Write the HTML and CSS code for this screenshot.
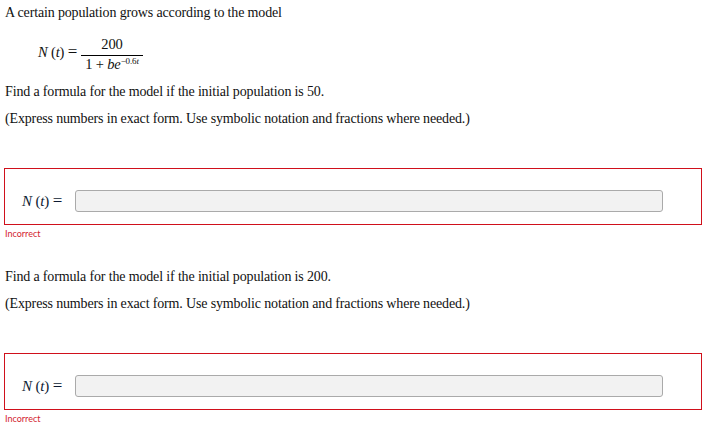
FILE: index.html
```html
<!DOCTYPE html>
<html>
<head>
<meta charset="utf-8">
<link rel="stylesheet" href="styles.css">
</head>
<body>
<div class="page">
  <p class="line first">A certain population grows according to the model</p>
  <div class="formula">
    <span class="lhs"><i>N</i> (<i>t</i>) <span class="eq">=</span></span>
    <span class="frac">
      <span class="num">200</span>
      <span class="den">1 + <i>be</i><sup>−0.6<i>t</i></sup></span>
    </span>
  </div>

  <p class="line find">Find a formula for the model if the initial population is 50.</p>
  <p class="line note">(Express numbers in exact form. Use symbolic notation and fractions where needed.)</p>
  <div class="answer">
    <span class="label"><i>N</i> (<i>t</i>) <span class="eq">=</span></span>
    <input class="field" type="text">
  </div>
  <div class="status">Incorrect</div>

  <p class="line find second">Find a formula for the model if the initial population is 200.</p>
  <p class="line note">(Express numbers in exact form. Use symbolic notation and fractions where needed.)</p>
  <div class="answer">
    <span class="label"><i>N</i> (<i>t</i>) <span class="eq">=</span></span>
    <input class="field" type="text">
  </div>
  <div class="status last">Incorrect</div>
</div>
</body>
</html>
```
FILE: styles.css
```css
html, body {
  margin: 0;
  padding: 0;
  background: #fff;
}
.page {
  padding: 5px 6px 0 4px;
  font-family: "Liberation Serif", serif;
  font-size: 14px;
  letter-spacing: -0.15px;
  color: #111;
}
.line {
  margin: 0;
  padding-left: 1px;
  line-height: 16px;
}
.formula {
  display: flex;
  align-items: flex-start;
  margin: 16px 0 0 34px;
  font-size: 14.5px;
}
.lhs {
  margin-top: 7px;
  margin-right: 4px;
  white-space: pre;
  line-height: 16px;
}
.eq {
  font-size: 17px;
  line-height: 0;
}
.frac {
  display: inline-flex;
  flex-direction: column;
  align-items: center;
}
.num {
  padding: 0 4px 3px;
  line-height: 15px;
}
.den {
  border-top: 1px solid #000;
  padding: 1px 4px 0;
  line-height: 15px;
}
.den sup {
  font-size: 9px;
  vertical-align: 5px;
  line-height: 0;
}
.find {
  margin-top: 12px;
}
.note {
  margin-top: 11px;
}
.second {
  margin-top: 0;
}
.answer {
  margin-top: 41px;
  height: 57px;
  border: 1px solid #d0101b;
  display: flex;
  align-items: center;
  padding: 9px 38px 0 17px;
  box-sizing: border-box;
}
.label {
  width: 53px;
  flex: none;
  font-size: 15px;
  color: #0d1a33;
  white-space: pre;
}
.field {
  flex: 1;
  height: 22px;
  box-sizing: border-box;
  margin: 0;
  border: 1px solid #aaa;
  border-radius: 3px;
  background: #f2f2f2;
  padding: 0 6px;
}
.status {
  font-family: Lato, "Open Sans", sans-serif;
  font-size: 9px;
  letter-spacing: 0;
  color: #d3232f;
  line-height: 12px;
  padding: 3px 0 0 1px;
  height: 44px;
  box-sizing: border-box;
}
.status.last {
  height: 18px;
}
```
